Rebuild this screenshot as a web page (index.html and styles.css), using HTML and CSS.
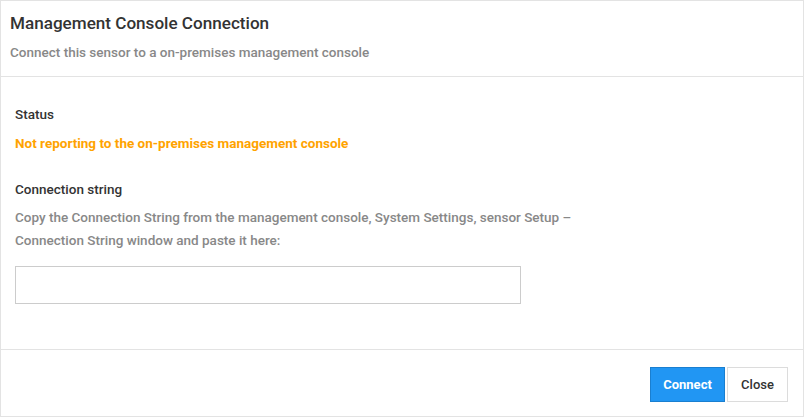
FILE: index.html
```html
<!DOCTYPE html>
<html>
<head>
<meta charset="utf-8">
<link rel="stylesheet" href="styles.css">
</head>
<body>
<div class="modal">
  <div class="modal-header">
    <div class="modal-title">Management Console Connection</div>
    <div class="modal-subtitle">Connect this sensor to a on-premises management console</div>
  </div>
  <div class="modal-body">
    <div class="label">Status</div>
    <div class="status-warn">Not reporting to the on-premises management console</div>
    <div class="label label-second">Connection string</div>
    <div class="desc">Copy the Connection String from the management console, System Settings, sensor Setup –<br>Connection String window and paste it here:</div>
    <input class="conn-input" type="text">
  </div>
  <div class="modal-footer">
    <button class="btn btn-primary">Connect</button>
    <button class="btn btn-default">Close</button>
  </div>
</div>
</body>
</html>
```
FILE: styles.css
```css
html, body {
  margin: 0;
  padding: 0;
  background: #fff;
}
body {
  font-family: Roboto, "Liberation Sans", Arial, sans-serif;
  color: #333;
}
.modal {
  width: 804px;
  height: 417px;
  box-sizing: border-box;
  border: 1px solid #e3e3e3;
  display: flex;
  flex-direction: column;
  background: #fff;
}
.modal-header {
  padding: 11px 9px 14px;
  border-bottom: 1px solid #e3e3e3;
}
.modal-title {
  font-size: 17.1px;
  font-weight: 500;
  line-height: 22px;
  color: #333;
}
.modal-subtitle {
  margin-top: 8px;
  font-size: 13.5px;
  font-weight: 500;
  line-height: 20px;
  color: #888;
}
.modal-body {
  flex: 1;
  padding: 28px 14px 0;
  border-bottom: 1px solid #e3e3e3;
}
.label {
  font-size: 13.5px;
  font-weight: 500;
  line-height: 18px;
  color: #333;
}
.label-second {
  margin-top: 28px;
}
.status-warn {
  margin-top: 11px;
  font-size: 13.5px;
  font-weight: 700;
  line-height: 18px;
  color: #ffa300;
}
.desc {
  margin-top: 8px;
  font-size: 13.5px;
  font-weight: 500;
  line-height: 23px;
  color: #888;
}
.conn-input {
  display: block;
  margin-top: 14px;
  width: 506px;
  height: 38px;
  box-sizing: border-box;
  border: 1px solid #cccccc;
  border-radius: 0;
  outline: none;
  padding: 0 10px;
  font-family: inherit;
  font-size: 13px;
}
.modal-footer {
  display: flex;
  justify-content: flex-end;
  gap: 2px;
  padding: 17px 15px 14px;
}
.btn {
  height: 35px;
  box-sizing: border-box;
  font-family: inherit;
  font-size: 13px;
  border-radius: 0;
  cursor: pointer;
  padding: 0;
}
.btn-primary {
  width: 75px;
  background: #2196f3;
  border: 1px solid #1a7fd0;
  color: #fff;
  font-weight: 700;
}
.btn-default {
  width: 61px;
  background: #fff;
  border: 1px solid #dcdcdc;
  color: #333;
  font-weight: 500;
}
```
